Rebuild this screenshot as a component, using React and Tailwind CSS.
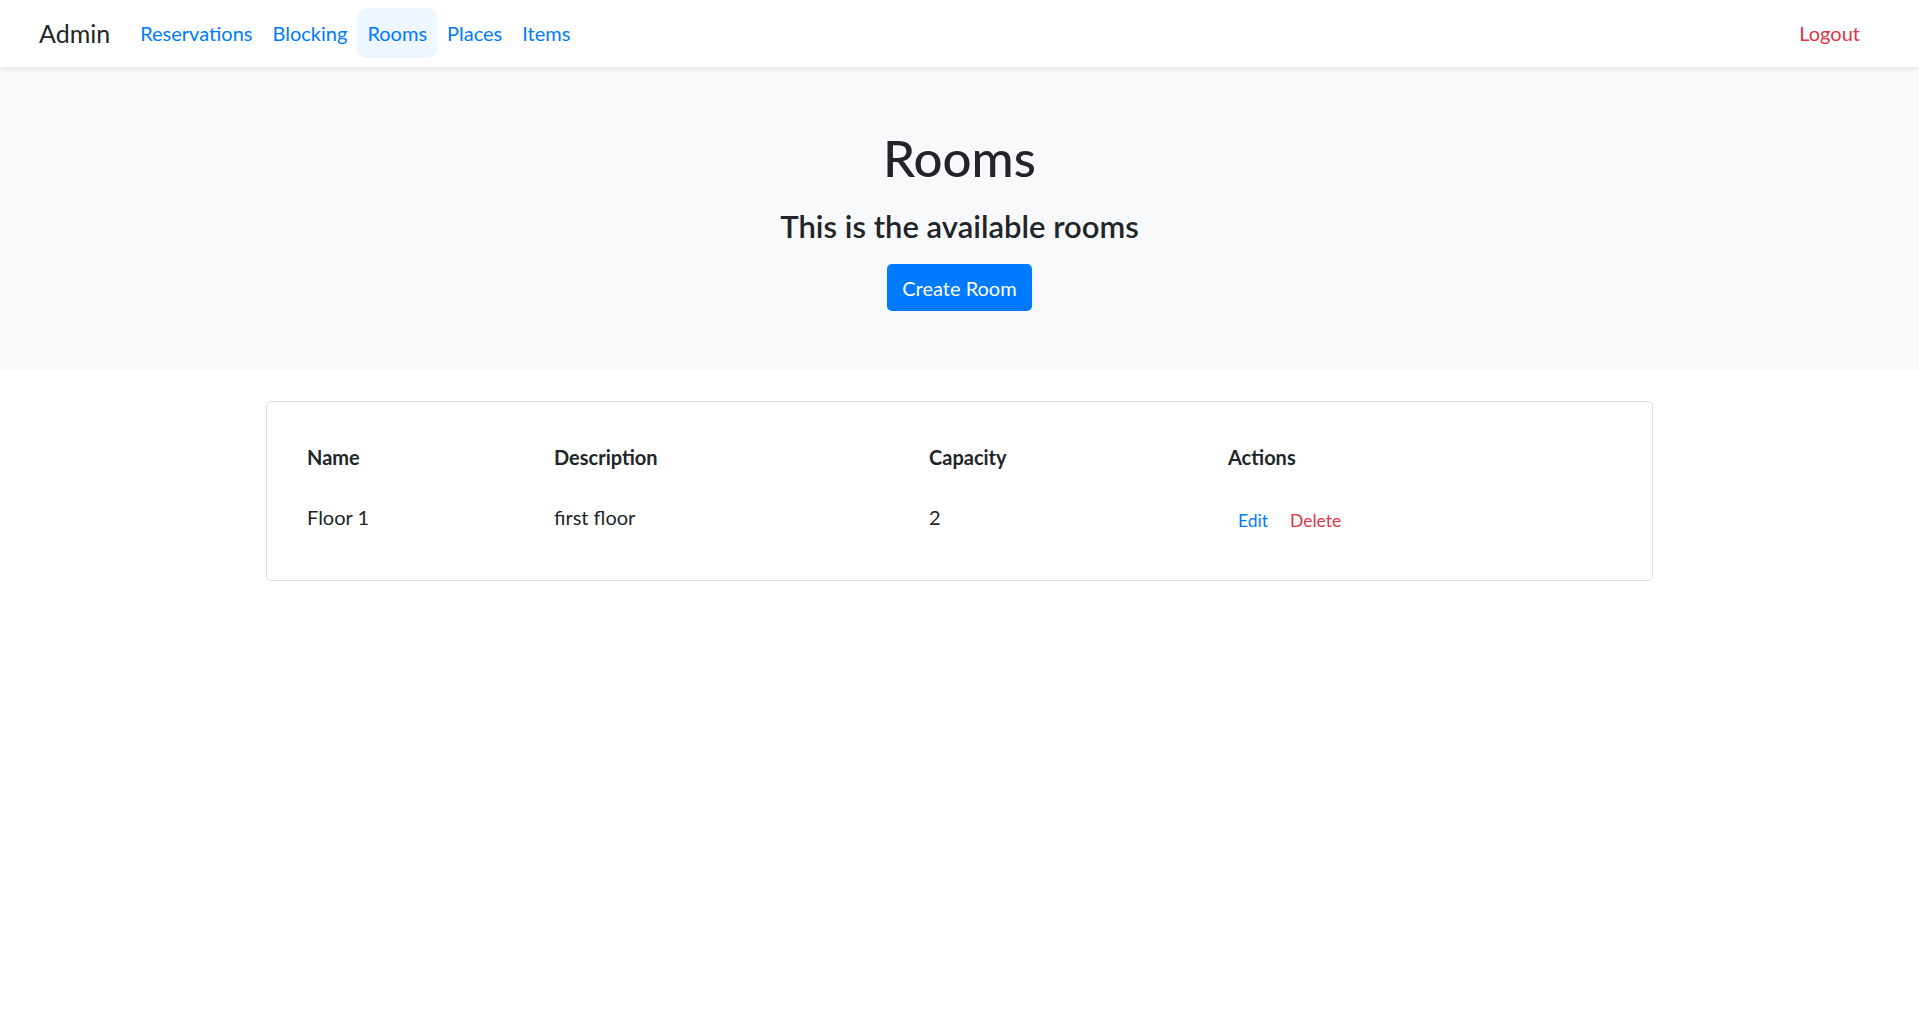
import React from 'react';

const rooms = [
  { id: 1, name: 'Floor 1', description: 'first floor', capacity: 2 },
];

const navLinks = ['Reservations', 'Blocking', 'Rooms', 'Places', 'Items'];

const App = () => {
  return (
    <div className="min-h-screen bg-white text-[#212529]" style={{ fontFamily: 'Lato, "Open Sans", sans-serif' }}>
      {/* navbar */}
      <nav className="relative z-10 h-[67px] bg-white flex items-center pl-[39px] pr-[59px] shadow-[0_2px_6px_rgba(0,0,0,0.08)]">
        <a href="#" className="text-[25px] leading-[30px] text-[#212529] mr-[20px] -mt-[2px]">Admin</a>
        <ul className="flex items-center -mt-[2px]">
          {navLinks.map(link => (
            <li key={link}>
              <a
                href="#"
                className={`block px-[10px] h-[50px] leading-[50px] rounded-[10px] text-[20px] text-[#007bff] ${link === 'Rooms' ? 'bg-[#eef6ff]' : ''}`}
              >
                {link}
              </a>
            </li>
          ))}
        </ul>
        <a href="#" className="ml-auto -mt-[2px] text-[20px] leading-[30px] text-[#dc3545]">Logout</a>
      </nav>

      {/* header */}
      <div className="bg-[#f8f9fa] h-[303px] pt-[61px] text-center">
        <h1 className="text-[51px] leading-[60px] font-medium">Rooms</h1>
        <h4 className="mt-[20px] text-[31px] leading-[36px] font-semibold">This is the available rooms</h4>
        <button className="mt-[20px] h-[47px] px-[15px] rounded-[5px] bg-[#007bff] text-white text-[20px] leading-[30px]">
          Create Room
        </button>
      </div>

      {/* table */}
      <div className="w-[1425px] mx-auto px-[19px] pt-[31px]">
        <div className="border border-[#dfdfdf] rounded-[5px] p-[25px]">
          <table className="w-full text-left text-[20px]">
            <thead>
              <tr>
                <th className="w-[247px] p-[15px] leading-[30px] font-bold">Name</th>
                <th className="w-[375px] p-[15px] leading-[30px] font-bold">Description</th>
                <th className="w-[299px] p-[15px] leading-[30px] font-bold">Capacity</th>
                <th className="p-[15px] leading-[30px] font-bold">Actions</th>
              </tr>
            </thead>
            <tbody>
              {rooms.map(room => (
                <tr key={room.id}>
                  <td className="p-[15px] leading-[30px] align-top">{room.name}</td>
                  <td className="p-[15px] leading-[30px] align-top">{room.description}</td>
                  <td className="p-[15px] leading-[30px] align-top">{room.capacity}</td>
                  <td className="p-[15px] align-top">
                    <div className="flex gap-[2px]">
                      <button className="h-[38px] px-[10px] text-[17.5px] text-[#007bff]">Edit</button>
                      <button className="h-[38px] px-[10px] text-[17.5px] text-[#dc3545]">Delete</button>
                    </div>
                  </td>
                </tr>
              ))}
            </tbody>
          </table>
        </div>
      </div>
    </div>
  );
};

export default App;
